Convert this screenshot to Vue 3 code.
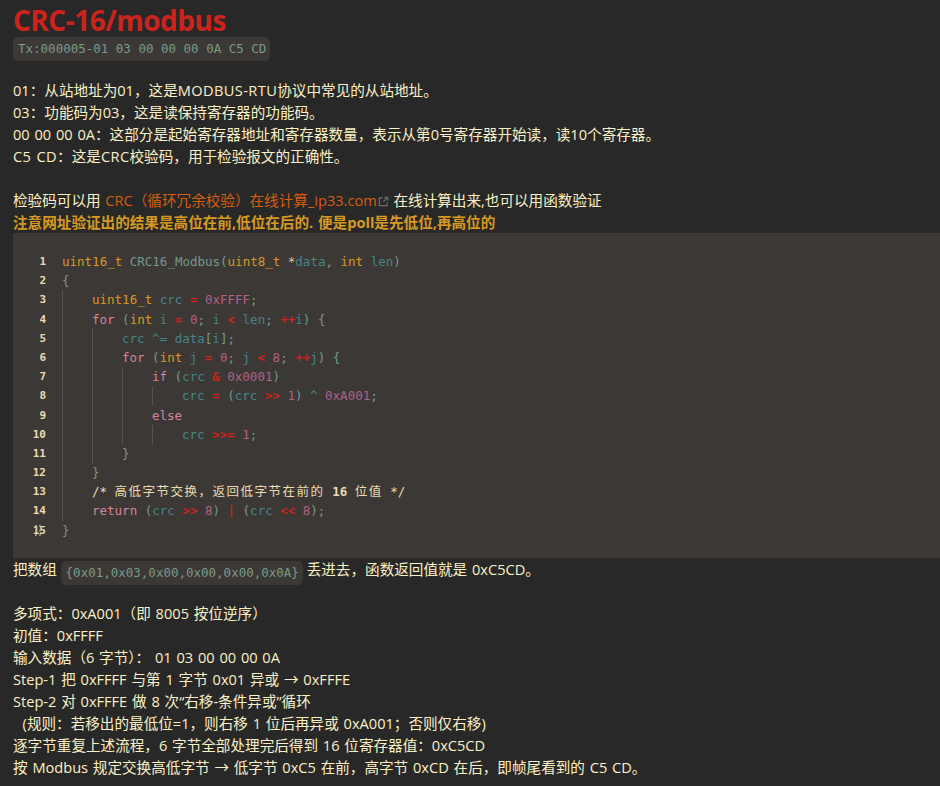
<script setup>
const code = [
  [0, [['t','uint16_t'],['',' '],['f','CRC16_Modbus'],['p','('],['t','uint8_t'],['',' '],['o2','*'],['v','data'],['p',', '],['t','int'],['',' '],['v','len'],['p',')']]],
  [0, [['p','{']]],
  [1, [['t','uint16_t'],['',' '],['v','crc'],['',' '],['o','='],['',' '],['n','0xFFFF'],['p',';']]],
  [1, [['k','for'],['',' '],['p','('],['t','int'],['',' '],['v','i'],['',' '],['o','='],['',' '],['n','0'],['p','; '],['v','i'],['',' '],['o','<'],['',' '],['v','len'],['p','; '],['o','++'],['v','i'],['p',') {']]],
  [2, [['v','crc'],['',' '],['v','^='],['',' '],['v','data'],['p','['],['v','i'],['p','];']]],
  [2, [['k','for'],['',' '],['p','('],['t','int'],['',' '],['v','j'],['',' '],['o','='],['',' '],['n','0'],['p','; '],['v','j'],['',' '],['o','<'],['',' '],['n','8'],['p','; '],['o','++'],['v','j'],['p',') {']]],
  [3, [['k','if'],['',' '],['p','('],['v','crc'],['',' '],['o','&'],['',' '],['n','0x0001'],['p',')']]],
  [4, [['v','crc'],['',' '],['o','='],['',' '],['p','('],['v','crc'],['',' '],['o','>>'],['',' '],['n','1'],['p',') '],['v','^'],['',' '],['n','0xA001'],['p',';']]],
  [3, [['k','else']]],
  [4, [['v','crc'],['',' '],['o','>>='],['',' '],['n','1'],['p',';']]],
  [2, [['p','}']]],
  [1, [['p','}']]],
  [1, [['c','/* '],['cj','高低字节交换，返回低字节在前的'],['c',' '],['cb','16'],['c',' '],['cj','位值'],['c',' */']]],
  [1, [['k','return'],['',' '],['p','('],['v','crc'],['',' '],['o','>>'],['',' '],['n','8'],['p',') '],['o','|'],['',' '],['p','('],['v','crc'],['',' '],['o','<<'],['',' '],['n','8'],['p',');']]],
  [0, [['p','}']]],
]
const steps = [
  '多项式：0xA001（即 8005 按位逆序）',
  '初值：0xFFFF',
  '输入数据（6 字节）： 01 03 00 00 00 0A',
  'Step-1 把 0xFFFF 与第 1 字节 0x01 异或 → 0xFFFE',
  'Step-2 对 0xFFFE 做 8 次“右移-条件异或”循环',
  '\u00a0 (规则：若移出的最低位=1，则右移 1 位后再异或 0xA001；否则仅右移)',
  '逐字节重复上述流程，6 字节全部处理完后得到 16 位寄存器值：0xC5CD',
  '按 Modbus 规定交换高低字节 → 低字节 0xC5 在前，高字节 0xCD 在后，即帧尾看到的 C5 CD。',
]
const dots = [0, 1, 2].flatMap(r => [0, 1].map(c => ({ x: c * 4, y: r * 4.5 })))
</script>

<template>
  <div class="page">
    <h1 class="title">CRC-16/modbus</h1>
    <div class="tx"><code class="pill">Tx:000005-01 03 00 00 00 0A C5 CD</code></div>

    <section class="intro">
      <div class="ln">01：从站地址为01，这是<span class="caps">MODBUS-RTU</span>协议中常见的从站地址。</div>
      <div class="ln">03：功能码为03，这是读保持寄存器的功能码。</div>
      <div class="ln">00 00 00 0A：这部分是起始寄存器地址和寄存器数量，表示从第0号寄存器开始读，读10个寄存器。</div>
      <div class="ln"><span class="caps">C5 CD</span>：这是<span class="caps">CRC</span>校验码，用于检验报文的正确性。</div>
      <div class="ln blank"></div>
      <div class="ln">检验码可以用 <a class="link">CRC（循环冗余校验）在线计算_ip33.com<svg class="ext" viewBox="0 0 12 12" width="11" height="11"><path d="M5 2H1.5v8.5H10V7" fill="none" stroke="currentColor" stroke-width="1.4"/><path d="M7 1.5h3.5V5M10.2 1.8 5.6 6.4" fill="none" stroke="currentColor" stroke-width="1.4"/></svg></a> 在线计算出来,也可以用函数验证</div>
      <div class="ln warn">注意网址验证出的结果是高位在前,低位在后的. 便是poll是先低位,再高位的</div>
    </section>

    <div class="block">
      <div v-for="(row, i) in code" :key="i" class="row">
        <span class="num">{{ i + 1 }}</span>
        <span class="src">
          <span v-for="g in row[0]" :key="g" class="guide"></span>
          <span v-for="(tok, j) in row[1]" :key="j" :class="tok[0]">{{ tok[1] }}</span>
        </span>
      </div>
      <svg class="grip" width="6" height="12" viewBox="0 0 6 12"><rect v-for="d in dots" :key="d.x + '-' + d.y" :x="d.x" :y="d.y" width="2" height="2" /></svg>
    </div>

    <div class="ln after">把数组 <code class="pill inl">{0x01,0x03,0x00,0x00,0x00,0x0A}</code> 丢进去，函数返回值就是 0xC5CD。</div>
    <div class="ln blank"></div>
    <div v-for="l in steps" :key="l" class="ln">{{ l }}</div>
  </div>
</template>

<style>
html, body { background: #282828; }
</style>

<style scoped>
.page {
  width: 940px;
  height: 786px;
  overflow: hidden;
  box-sizing: border-box;
  padding: 5px 0 0 13px;
  background: #282828;
  color: #fbf1c7;
  font: 14.6px/22px "Open Sans", "Noto Sans CJK SC", sans-serif;
  word-spacing: 1px;
}
.title {
  margin: 0;
  color: #cc241d;
  font: 700 28px/31px "Open Sans", "Noto Sans CJK SC", sans-serif;
  letter-spacing: -0.5px;
}
.tx { height: 43px; }
.pill {
  display: inline-block;
  height: 24px;
  padding: 0 4px 0 5px;
  border-radius: 5px;
  background: #3c3836;
  color: #7a9a8a;
  font: 12.5px/24px "DejaVu Sans Mono", monospace;
  word-spacing: 0;
}
.ln { height: 22px; white-space: nowrap; }
.caps { letter-spacing: 0.4px; }
.link { color: #d65d0e; }
.ext { color: #6b6b6b; vertical-align: -1px; margin-left: 1px; }
.warn { color: #d79921; font-weight: 700; }
.block {
  position: relative;
  box-sizing: border-box;
  height: 325px;
  padding: 19px 0 0;
  background: #3c3836;
  font: 12.5px/19.2px "DejaVu Sans Mono", "Noto Sans CJK SC", monospace;
  word-spacing: 0;
}
.row { display: flex; height: 19.2px; }
.num {
  width: 33px;
  margin-right: 16px;
  text-align: right;
  color: #ebdbb2;
  font-size: 11px;
  font-weight: 700;
}
.src { display: flex; white-space: pre; }
.guide {
  flex: none;
  width: 30px;
  height: 19.2px;
  box-shadow: inset 1px 0 #575350;
}
.t { color: #d79921; }
.f { color: #74988c; }
.p { color: #74988c; }
.v { color: #458588; }
.o { color: #cc241d; font-weight: 700; }
.o2 { color: #d5c4a1; }
.n { color: #b16286; }
.k { color: #d3869b; }
.c { color: #ebdbb2; }
.cb { color: #ebdbb2; font-weight: 700; }
.cj { color: #ebdbb2; letter-spacing: 1.5px; }
.grip {
  position: absolute;
  left: 22px;
  top: 292px;
  fill: #bdae93;
  fill-opacity: 0.7;
}
.after .inl { vertical-align: -2px; margin: 0 -1px 0 -1px; }
</style>
